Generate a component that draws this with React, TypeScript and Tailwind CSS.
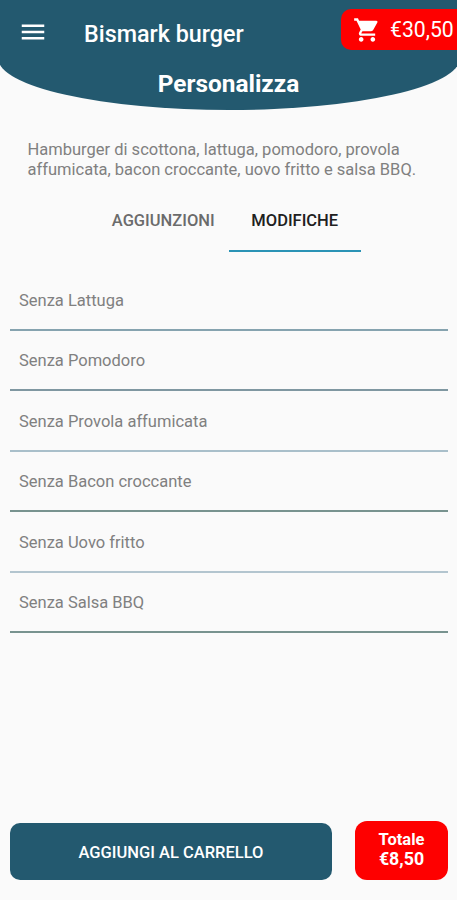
import { clsx } from "clsx";
import { MdMenu, MdShoppingCart } from "react-icons/md";

const options = [
  { label: "Senza Lattuga", line: "border-[#86a3af]" },
  { label: "Senza Pomodoro", line: "border-[#7f97a1]" },
  { label: "Senza Provola affumicata", line: "border-[#a9bfca]" },
  { label: "Senza Bacon croccante", line: "border-[#78938f]" },
  { label: "Senza Uovo fritto", line: "border-[#b3c5cf]" },
  { label: "Senza Salsa BBQ", line: "border-[#78938f]" },
];

const tabs = ["Aggiunzioni", "Modifiche"];

function Header() {
  return (
    <header className="-mx-[2.5px] h-[110px] bg-[#23596f] rounded-b-[50%_52px] px-[2.5px] text-white">
      <div className="flex h-[50px] items-end">
        <button className="ml-[18px] mb-[3px]">
          <MdMenu className="size-[30px]" />
        </button>
        <h1 className="ml-9 mb-[2px] text-[23.3px] leading-[28px] font-medium">Bismark burger</h1>
        <button className="ml-auto flex h-[41px] w-[116px] items-center gap-[9px] rounded-l-[10px] bg-[#fe0000] pl-3">
          <MdShoppingCart className="size-7 shrink-0" />
          <span className="text-[21.2px]">€30,50</span>
        </button>
      </div>
      <h2 className="mt-[19px] text-center text-[24.4px] leading-[30px] font-bold">Personalizza</h2>
    </header>
  );
}

function Tabs({ active }: { active: string }) {
  return (
    <nav className="mt-[10px] ml-px flex justify-center">
      {tabs.map((tab) => (
        <button
          key={tab}
          className={clsx(
            "h-[63px] w-[131.5px] border-b-2 pt-1 text-[16.5px] font-medium uppercase",
            tab === active ? "border-[#2a93b5] text-[#202020]" : "border-transparent text-[#6b6b6b]"
          )}
        >
          {tab}
        </button>
      ))}
    </nav>
  );
}

export default function App() {
  return (
    <div className="flex h-[900px] w-[457px] flex-col overflow-hidden bg-[#fafafa] font-['Roboto',sans-serif]">
      <Header />
      <p className="mt-[30px] ml-[27.5px] w-[400px] text-[16.5px] leading-[19.5px] text-[#808080]">
        Hamburger di scottona, lattuga, pomodoro, provola affumicata, bacon croccante, uovo fritto e salsa BBQ.
      </p>
      <Tabs active="Modifiche" />
      <ul className="mt-[18px] ml-2.5 mr-[9px]">
        {options.map(({ label, line }) => (
          <li
            key={label}
            className={clsx("flex h-[60.5px] items-center border-b-2 pt-1 pl-[9px] text-[16.5px] text-[#808080]", line)}
          >
            {label}
          </li>
        ))}
      </ul>
      <footer className="mt-auto mb-5 flex items-end justify-between pl-2.5 pr-[9px] text-white">
        <button className="h-[57px] w-[322px] rounded-[10px] bg-[#23596f] pt-1 text-[16.5px] font-medium uppercase">
          Aggiungi al carrello
        </button>
        <div className="flex h-[59px] w-[93px] flex-col items-center justify-center rounded-[12px] bg-[#fe0000] pb-[3px] font-bold">
          <span className="text-[16.5px] leading-[19px]">Totale</span>
          <span className="text-[17.8px] leading-[19px]">€8,50</span>
        </div>
      </footer>
    </div>
  );
}
